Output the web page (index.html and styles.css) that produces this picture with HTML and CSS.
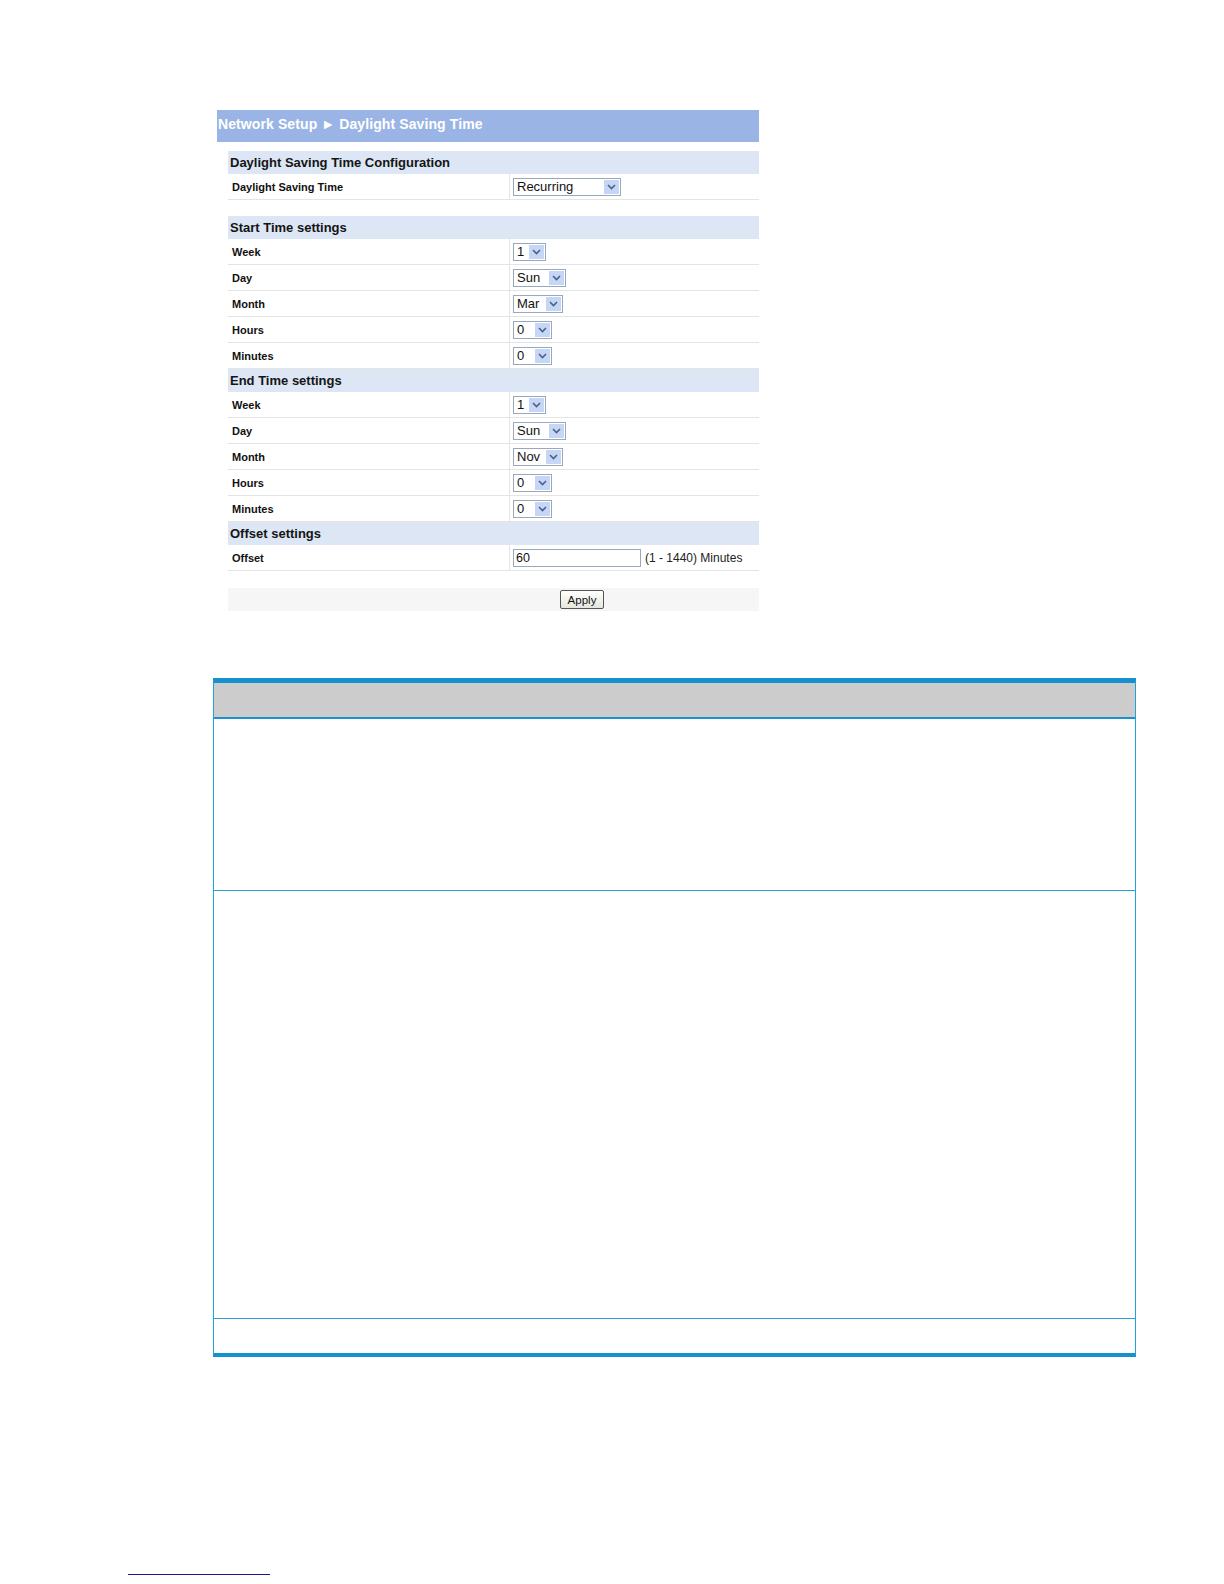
FILE: index.html
```html
<!DOCTYPE html>
<html>
<head>
<meta charset="utf-8">
<title>Daylight Saving Time</title>
<link rel="stylesheet" href="styles.css">
</head>
<body>
<div class="shot">
  <div class="titlebar">Network Setup &#9658; Daylight Saving Time</div>
  <div class="panel">
    <div class="band">Daylight Saving Time Configuration</div>
    <div class="row"><div class="lbl">Daylight Saving Time</div><div class="val"><span class="sel w-rec"><span class="txt">Recurring</span><span class="arr"><svg viewBox="0 0 9 6" width="9" height="6"><path d="M1 1 L4.5 4.5 L8 1" fill="none" stroke="#4d6185" stroke-width="1.6"/></svg></span></span></div></div>

    <div class="band gap">Start Time settings</div>
    <div class="row"><div class="lbl">Week</div><div class="val"><span class="sel w-1"><span class="txt">1</span><span class="arr"><svg viewBox="0 0 9 6" width="9" height="6"><path d="M1 1 L4.5 4.5 L8 1" fill="none" stroke="#4d6185" stroke-width="1.6"/></svg></span></span></div></div>
    <div class="row"><div class="lbl">Day</div><div class="val"><span class="sel w-sun"><span class="txt">Sun</span><span class="arr"><svg viewBox="0 0 9 6" width="9" height="6"><path d="M1 1 L4.5 4.5 L8 1" fill="none" stroke="#4d6185" stroke-width="1.6"/></svg></span></span></div></div>
    <div class="row"><div class="lbl">Month</div><div class="val"><span class="sel w-mon"><span class="txt">Mar</span><span class="arr"><svg viewBox="0 0 9 6" width="9" height="6"><path d="M1 1 L4.5 4.5 L8 1" fill="none" stroke="#4d6185" stroke-width="1.6"/></svg></span></span></div></div>
    <div class="row"><div class="lbl">Hours</div><div class="val"><span class="sel w-0"><span class="txt">0</span><span class="arr"><svg viewBox="0 0 9 6" width="9" height="6"><path d="M1 1 L4.5 4.5 L8 1" fill="none" stroke="#4d6185" stroke-width="1.6"/></svg></span></span></div></div>
    <div class="row"><div class="lbl">Minutes</div><div class="val"><span class="sel w-0"><span class="txt">0</span><span class="arr"><svg viewBox="0 0 9 6" width="9" height="6"><path d="M1 1 L4.5 4.5 L8 1" fill="none" stroke="#4d6185" stroke-width="1.6"/></svg></span></span></div></div>

    <div class="band">End Time settings</div>
    <div class="row"><div class="lbl">Week</div><div class="val"><span class="sel w-1"><span class="txt">1</span><span class="arr"><svg viewBox="0 0 9 6" width="9" height="6"><path d="M1 1 L4.5 4.5 L8 1" fill="none" stroke="#4d6185" stroke-width="1.6"/></svg></span></span></div></div>
    <div class="row"><div class="lbl">Day</div><div class="val"><span class="sel w-sun"><span class="txt">Sun</span><span class="arr"><svg viewBox="0 0 9 6" width="9" height="6"><path d="M1 1 L4.5 4.5 L8 1" fill="none" stroke="#4d6185" stroke-width="1.6"/></svg></span></span></div></div>
    <div class="row"><div class="lbl">Month</div><div class="val"><span class="sel w-mon"><span class="txt">Nov</span><span class="arr"><svg viewBox="0 0 9 6" width="9" height="6"><path d="M1 1 L4.5 4.5 L8 1" fill="none" stroke="#4d6185" stroke-width="1.6"/></svg></span></span></div></div>
    <div class="row"><div class="lbl">Hours</div><div class="val"><span class="sel w-0"><span class="txt">0</span><span class="arr"><svg viewBox="0 0 9 6" width="9" height="6"><path d="M1 1 L4.5 4.5 L8 1" fill="none" stroke="#4d6185" stroke-width="1.6"/></svg></span></span></div></div>
    <div class="row"><div class="lbl">Minutes</div><div class="val"><span class="sel w-0"><span class="txt">0</span><span class="arr"><svg viewBox="0 0 9 6" width="9" height="6"><path d="M1 1 L4.5 4.5 L8 1" fill="none" stroke="#4d6185" stroke-width="1.6"/></svg></span></span></div></div>

    <div class="band">Offset settings</div>
    <div class="row"><div class="lbl">Offset</div><div class="val"><span class="inp">60</span><span class="hint">(1 - 1440) Minutes</span></div></div>

    <div class="applybar"><span class="btn">Apply</span></div>
  </div>
</div>

<div class="doctable">
  <div class="dt-head"></div>
  <div class="dt-row r1"></div>
  <div class="dt-row r2"></div>
  <div class="dt-row r3"></div>
</div>

<div class="linkline"></div>
</body>
</html>
```

FILE: styles.css
```css
html, body {
  margin: 0;
  padding: 0;
  background: #ffffff;
}
body {
  font-family: "Liberation Sans", Arial, sans-serif;
  color: #111111;
  width: 1224px;
  height: 1584px;
  overflow: hidden;
}
.shot {
  margin-left: 217px;
  padding-top: 110px;
  width: 542px;
}
.titlebar {
  height: 32px;
  line-height: 28px;
  background: #9ab4e5;
  color: #ffffff;
  font-weight: bold;
  font-size: 14px;
  padding-left: 1px;
  letter-spacing: 0.1px;
}
.panel {
  margin-left: 11px;
  margin-top: 9px;
  width: 531px;
}
.band {
  height: 23px;
  line-height: 23px;
  background: #dce6f4;
  font-weight: bold;
  font-size: 13px;
  padding-left: 2px;
  color: #151515;
}
.band.gap {
  margin-top: 16px;
}
.row {
  height: 25px;
  display: grid;
  grid-template-columns: 281px 1fr;
  border-bottom: 1px solid #e4e4e4;
  background: #ffffff;
}
.lbl {
  font-weight: bold;
  font-size: 11px;
  padding-left: 4px;
  display: flex;
  align-items: center;
}
.val {
  border-left: 1px solid #e4e4e4;
  padding-left: 3px;
  display: flex;
  align-items: center;
}
.sel {
  display: inline-flex;
  align-items: center;
  justify-content: space-between;
  height: 18px;
  box-sizing: border-box;
  border: 1px solid #9aa8bd;
  background: #ffffff;
  font-size: 13px;
}
.sel .txt {
  padding-left: 3px;
  line-height: 16px;
}
.sel .arr {
  width: 15px;
  height: 14px;
  margin-right: 1px;
  background: #c6d6f6;
  display: flex;
  align-items: center;
  justify-content: center;
}
.w-rec { width: 108px; }
.w-1 { width: 33px; }
.w-sun { width: 53px; }
.w-mon { width: 50px; }
.w-0 { width: 39px; }
.inp {
  width: 128px;
  height: 18px;
  box-sizing: border-box;
  border: 1px solid #9aa8bd;
  font-size: 12.5px;
  line-height: 16px;
  padding-left: 2px;
}
.hint {
  font-size: 12px;
  margin-left: 4px;
  color: #222222;
}
.applybar {
  margin-top: 17px;
  height: 23px;
  background: #f6f6f6;
  padding-left: 332px;
  display: flex;
  align-items: center;
}
.btn {
  width: 44px;
  height: 19px;
  box-sizing: border-box;
  border: 1px solid #555555;
  border-radius: 2px;
  background: linear-gradient(#ffffff, #e6e6e0);
  font-size: 11.5px;
  display: flex;
  align-items: center;
  justify-content: center;
}
.doctable {
  margin-top: 67px;
  margin-left: 213px;
  width: 923px;
  box-sizing: border-box;
  border-top: 5px solid #1790d0;
  border-bottom: 4px solid #1790d0;
  border-left: 1px solid #22a2dc;
  border-right: 1px solid #22a2dc;
}
.dt-head {
  height: 34px;
  background: #cccccc;
  border-bottom: 2px solid #1a92d2;
}
.dt-row {
  border-bottom: 1px solid #2aa0d8;
}
.dt-row.r3 {
  border-bottom: none;
}
.r1 { height: 171px; }
.r2 { height: 427px; }
.r3 { height: 34px; }
.linkline {
  margin-top: 217px;
  margin-left: 128px;
  width: 142px;
  border-top: 1px solid #1b1b8a;
}
```
